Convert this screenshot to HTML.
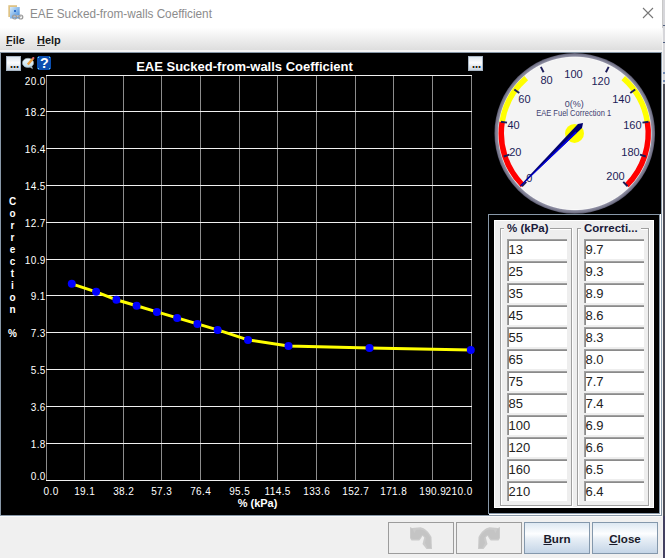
<!DOCTYPE html>
<html><head><meta charset="utf-8">
<style>
html,body{margin:0;padding:0}
body{width:665px;height:558px;overflow:hidden;position:relative;background:#f0f0f0;font-family:"Liberation Sans",sans-serif}
.a{position:absolute}
#tb{left:0;top:0;width:662px;height:28px;background:#fff}
#ttl{left:29.5px;top:7px;font-size:12.4px;color:#8c8c8c;white-space:pre;transform:scaleX(0.948);transform-origin:0 0}
#mb{left:0;top:28px;width:662px;height:22px;background:linear-gradient(#fefefe,#dedede)}
.mi{font-size:11.8px;font-weight:700;color:#1a1a1a;top:32.5px;transform:scaleX(0.93);transform-origin:0 0}
.mi u{text-decoration:none}
#panel{left:0;top:52px;width:662px;height:464px;background:#000}
.fld{position:absolute;width:60px;height:20px;background:#fff;box-sizing:border-box;border-top:2px solid #8a8a8a;border-left:2px solid #8a8a8a;font-size:13px;color:#222;padding-left:0;text-indent:-0.5px;line-height:17px}
.fld:before{content:"";position:absolute;left:-2px;top:-2px;right:0;bottom:0;border-top:1px solid #a0a0a0;border-left:1px solid #a0a0a0}
.gt{top:222px;font-size:11.5px;font-weight:700;color:#1a1a3a;white-space:pre;background:#eee;padding:0 1px}
.btn{position:absolute;top:522px;height:32px;box-sizing:border-box;font-size:11.6px;font-weight:700;color:#1a1a2a;text-align:center;line-height:32px}
</style></head><body>
<div class="a" id="tb"></div>
<svg class="a" style="left:8px;top:5px" width="16" height="16" viewBox="0 0 16 16">
  <defs><linearGradient id="ig" x1="0" y1="0" x2="1" y2="1"><stop offset="0" stop-color="#d8ecfa"/><stop offset="1" stop-color="#3a86dc"/></linearGradient></defs>
  <rect x="0.3" y="0.2" width="8.7" height="11.8" fill="#d9b870" opacity="0.85"/>
  <rect x="2" y="2" width="9.7" height="11.5" fill="url(#ig)"/>
  <rect x="6" y="5" width="2" height="2" fill="#2a6cc8"/>
  <rect x="5.5" y="10.2" width="8" height="2" fill="#bdbdbd"/>
  <circle cx="6.5" cy="12" r="2" fill="none" stroke="#9a9a9a" stroke-width="1.2"/>
  <circle cx="12.8" cy="12" r="2" fill="none" stroke="#9a9a9a" stroke-width="1.2"/>
</svg>
<div class="a" id="ttl">EAE Sucked-from-walls Coefficient</div>
<svg class="a" style="left:642px;top:7px" width="12" height="12"><path d="M1 1L11 11M11 1L1 11" stroke="#777" stroke-width="1.1"/></svg>
<div class="a" id="mb"></div>
<div class="a" style="left:0;top:50px;width:662px;height:2px;background:#f4f4f4"></div>
<div class="a mi" style="left:6px"><u>F</u>ile</div>
<div class="a mi" style="left:37px"><u>H</u>elp</div>
<div class="a" style="left:6px;top:45px;width:6px;height:1px;background:#333"></div>
<div class="a" style="left:37px;top:45px;width:8px;height:1px;background:#333"></div>
<div class="a" id="panel"></div>
<div class="a" style="left:0;top:52px;width:662px;height:1px;background:#8898a8"></div>
<div class="a" style="left:0;top:52px;width:1px;height:464px;background:#8898a8"></div>
<div class="a" style="left:0;top:515px;width:662px;height:1px;background:#8898a8"></div>
<div class="a" style="left:0;top:516px;width:662px;height:1px;background:#fafafa"></div>
<div class="a" style="left:661px;top:52px;width:1px;height:464px;background:#8898a8"></div>
<div class="a" style="left:662px;top:0;width:1px;height:558px;background:#f4f4f4"></div>
<div class="a" style="left:662px;top:0;width:1px;height:28px;background:#c8c8c8"></div>
<div class="a" style="left:663px;top:0;width:2px;height:84px;background:#d6d6da"></div>
<div class="a" style="left:663px;top:84px;width:2px;height:432px;background:#4c4c56"></div>
<div class="a" style="left:663px;top:25px;width:2px;height:1px;background:#506080"></div>
<div class="a" style="left:663px;top:42px;width:2px;height:1px;background:#506080"></div>
<div class="a" style="left:663px;top:72px;width:2px;height:2px;background:#7088b0"></div>
<div class="a" style="left:663px;top:80px;width:2px;height:2px;background:#7088b0"></div>
<div class="a" style="left:663px;top:516px;width:2px;height:42px;background:#434060"></div>

<!--ICONS-->
<svg class="a" style="left:6px;top:56px" width="15" height="15" shape-rendering="crispEdges">
 <defs><linearGradient id="eb" x1="0" y1="0" x2="0" y2="1"><stop offset="0" stop-color="#dfe7ef"/><stop offset="0.45" stop-color="#fbfcfd"/><stop offset="1" stop-color="#c9d5e1"/></linearGradient></defs>
 <rect x="0" y="0" width="15" height="15" fill="#a9b6c4"/><rect x="1" y="1" width="13" height="13" fill="url(#eb)"/>
 <rect x="4" y="10" width="1" height="2" fill="#e0a050"/><rect x="5" y="10" width="1" height="2" fill="#302418"/><rect x="6" y="10" width="1" height="2" fill="#4a9ef0"/>
 <rect x="7" y="10" width="1" height="2" fill="#e0a050"/><rect x="8" y="10" width="1" height="2" fill="#302418"/><rect x="9" y="10" width="1" height="2" fill="#4a9ef0"/>
 <rect x="10" y="10" width="1" height="2" fill="#e0a050"/><rect x="11" y="10" width="1" height="2" fill="#302418"/><rect x="12" y="10" width="1" height="2" fill="#4a9ef0"/>
</svg>
<svg class="a" style="left:468px;top:56px" width="15" height="15" shape-rendering="crispEdges">
 <rect x="0" y="0" width="15" height="15" fill="#a9b6c4"/><rect x="1" y="1" width="13" height="13" fill="url(#eb)"/>
 <rect x="4" y="10" width="1" height="2" fill="#e0a050"/><rect x="5" y="10" width="1" height="2" fill="#302418"/><rect x="6" y="10" width="1" height="2" fill="#4a9ef0"/>
 <rect x="7" y="10" width="1" height="2" fill="#e0a050"/><rect x="8" y="10" width="1" height="2" fill="#302418"/><rect x="9" y="10" width="1" height="2" fill="#4a9ef0"/>
 <rect x="10" y="10" width="1" height="2" fill="#e0a050"/><rect x="11" y="10" width="1" height="2" fill="#302418"/><rect x="12" y="10" width="1" height="2" fill="#4a9ef0"/>
</svg>
<svg class="a" style="left:22px;top:57px" width="13" height="13" viewBox="0 0 13 13">
 <defs><linearGradient id="cb" x1="0" y1="0" x2="0" y2="1"><stop offset="0" stop-color="#eef8fc"/><stop offset="1" stop-color="#bcdcec"/></linearGradient></defs>
 <ellipse cx="6" cy="5.9" rx="5.6" ry="4.6" fill="url(#cb)" stroke="#8f9ea8" stroke-width="0.7"/>
 <path d="M8 10 L10.5 11.8 L10 9.6Z" fill="#c8e4f0" stroke="#8f9ea8" stroke-width="0.5"/>
 <path d="M5.8 7.4 L11 1.4" stroke="#eea040" stroke-width="2.3"/>
 <path d="M10.6 1.8 L12 0.4" stroke="#e86878" stroke-width="2"/>
</svg>
<svg class="a" style="left:37px;top:56px" width="14" height="14" shape-rendering="crispEdges">
 <rect x="1" y="0" width="12" height="14" fill="#0b4fb0"/><rect x="0" y="1" width="14" height="12" fill="#0b4fb0"/>
 <rect x="0" y="0" width="1" height="1" fill="#000"/><rect x="13" y="0" width="1" height="1" fill="#000"/><rect x="0" y="13" width="1" height="1" fill="#000"/><rect x="13" y="13" width="1" height="1" fill="#000"/>
 <rect x="1" y="1" width="1" height="1" fill="#7ad8c8"/><rect x="12" y="1" width="1" height="1" fill="#7ad8c8"/><rect x="1" y="12" width="1" height="1" fill="#7ad8c8"/><rect x="12" y="12" width="1" height="1" fill="#7ad8c8"/>
</svg>
<div class="a" style="left:40px;top:53.5px;font-size:15.5px;font-weight:700;color:#fff;transform:scaleX(0.92);transform-origin:0 0">?</div>
<!--/ICONS-->
<!--CHART-->
<svg class="a" style="left:0;top:0" width="665" height="558" shape-rendering="crispEdges">
<rect x="46" y="75" width="1" height="406" fill="#8c8c8c"/>
<rect x="84" y="75" width="1" height="406" fill="#8c8c8c"/>
<rect x="123" y="75" width="1" height="406" fill="#8c8c8c"/>
<rect x="161" y="75" width="1" height="406" fill="#8c8c8c"/>
<rect x="200" y="75" width="1" height="406" fill="#8c8c8c"/>
<rect x="239" y="75" width="1" height="406" fill="#8c8c8c"/>
<rect x="277" y="75" width="1" height="406" fill="#8c8c8c"/>
<rect x="316" y="75" width="1" height="406" fill="#8c8c8c"/>
<rect x="355" y="75" width="1" height="406" fill="#8c8c8c"/>
<rect x="393" y="75" width="1" height="406" fill="#8c8c8c"/>
<rect x="432" y="75" width="1" height="406" fill="#8c8c8c"/>
<rect x="471" y="75" width="1" height="406" fill="#8c8c8c"/>
<rect x="46" y="75" width="426" height="1" fill="#f0f0f0"/>
<rect x="46" y="111" width="426" height="1" fill="#f0f0f0"/>
<rect x="46" y="148" width="426" height="1" fill="#f0f0f0"/>
<rect x="46" y="185" width="426" height="1" fill="#f0f0f0"/>
<rect x="46" y="222" width="426" height="1" fill="#f0f0f0"/>
<rect x="46" y="259" width="426" height="1" fill="#f0f0f0"/>
<rect x="46" y="295" width="426" height="1" fill="#f0f0f0"/>
<rect x="46" y="332" width="426" height="1" fill="#f0f0f0"/>
<rect x="46" y="369" width="426" height="1" fill="#f0f0f0"/>
<rect x="46" y="406" width="426" height="1" fill="#f0f0f0"/>
<rect x="46" y="443" width="426" height="1" fill="#f0f0f0"/>
<rect x="46" y="480" width="426" height="1" fill="#f0f0f0"/>
</svg>
<svg class="a" style="left:0;top:0" width="665" height="558">
<g font-family="Liberation Sans" font-size="10" fill="#fff" letter-spacing="0.4">
<text x="45.8" y="84.6" text-anchor="end">20.0</text>
<text x="45.8" y="115.6" text-anchor="end">18.2</text>
<text x="45.8" y="152.6" text-anchor="end">16.4</text>
<text x="45.8" y="189.6" text-anchor="end">14.5</text>
<text x="45.8" y="226.6" text-anchor="end">12.7</text>
<text x="45.8" y="263.6" text-anchor="end">10.9</text>
<text x="45.8" y="299.6" text-anchor="end">9.1</text>
<text x="45.8" y="336.6" text-anchor="end">7.3</text>
<text x="45.8" y="373.6" text-anchor="end">5.5</text>
<text x="45.8" y="410.6" text-anchor="end">3.6</text>
<text x="45.8" y="447.6" text-anchor="end">1.8</text>
<text x="45.8" y="480.1" text-anchor="end">0.0</text>
<text x="43.5" y="494.6">0.0</text>
<text x="84.7" y="494.6" text-anchor="middle">19.1</text>
<text x="123.7" y="494.6" text-anchor="middle">38.2</text>
<text x="161.7" y="494.6" text-anchor="middle">57.3</text>
<text x="200.7" y="494.6" text-anchor="middle">76.4</text>
<text x="239.7" y="494.6" text-anchor="middle">95.5</text>
<text x="277.7" y="494.6" text-anchor="middle">114.5</text>
<text x="316.7" y="494.6" text-anchor="middle">133.6</text>
<text x="355.7" y="494.6" text-anchor="middle">152.7</text>
<text x="393.7" y="494.6" text-anchor="middle">171.8</text>
<text x="432.7" y="494.6" text-anchor="middle">190.9</text>
<text x="472.6" y="494.6" text-anchor="end">210.0</text>
</g>
<text x="257.5" y="507" font-family="Liberation Sans" font-size="11" font-weight="700" fill="#fff" text-anchor="middle">% (kPa)</text>
<g font-family="Liberation Sans" font-size="10" font-weight="700" fill="#fff" text-anchor="middle">
<text x="12.5" y="205">C</text>
<text x="12.5" y="217">o</text>
<text x="12.5" y="229">r</text>
<text x="12.5" y="241">r</text>
<text x="12.5" y="253">e</text>
<text x="12.5" y="265">c</text>
<text x="12.5" y="277">t</text>
<text x="12.5" y="289">i</text>
<text x="12.5" y="301">o</text>
<text x="12.5" y="313">n</text>
<text x="12.5" y="337">%</text>
</g>
<text x="244.5" y="71" font-family="Liberation Sans" font-size="13" font-weight="700" fill="#fff" text-anchor="middle">EAE Sucked-from-walls Coefficient</text>
<polyline fill="none" stroke="#ffff00" stroke-width="3" stroke-linejoin="round" points="71.8,283.8 96.1,291.8 116.4,299.8 136.6,305.8 156.9,311.9 177.1,317.9 197.4,323.9 217.6,329.9 248.0,339.9 288.5,345.9 369.5,347.9 470.8,349.9"/>
<circle cx="71.8" cy="283.8" r="4" fill="#0000ff"/>
<circle cx="96.1" cy="291.8" r="4" fill="#0000ff"/>
<circle cx="116.4" cy="299.8" r="4" fill="#0000ff"/>
<circle cx="136.6" cy="305.8" r="4" fill="#0000ff"/>
<circle cx="156.9" cy="311.9" r="4" fill="#0000ff"/>
<circle cx="177.1" cy="317.9" r="4" fill="#0000ff"/>
<circle cx="197.4" cy="323.9" r="4" fill="#0000ff"/>
<circle cx="217.6" cy="329.9" r="4" fill="#0000ff"/>
<circle cx="248.0" cy="339.9" r="4" fill="#0000ff"/>
<circle cx="288.5" cy="345.9" r="4" fill="#0000ff"/>
<circle cx="369.5" cy="347.9" r="4" fill="#0000ff"/>
<circle cx="470.8" cy="349.9" r="4" fill="#0000ff"/>
</svg>
<svg class="a" style="left:0;top:0" width="665" height="558">
<defs><linearGradient id="rg" x1="0" y1="0" x2="0" y2="1"><stop offset="0" stop-color="#5e5e70"/><stop offset="0.5" stop-color="#8a8a98"/><stop offset="1" stop-color="#5e5e70"/></linearGradient></defs>
<defs><radialGradient id="ring" cx="574.75" cy="133.4" r="80.3" gradientUnits="userSpaceOnUse"><stop offset="0.948" stop-color="#ffffff"/><stop offset="0.962" stop-color="#8c8ca0"/><stop offset="0.985" stop-color="#76768a"/><stop offset="1" stop-color="#55556a"/></radialGradient></defs>
<circle cx="574.75" cy="133.4" r="80.3" fill="url(#ring)"/>
<circle cx="574.75" cy="133.4" r="76.2" fill="#f4f4f4"/>
<path d="M522.78,185.37 A73.5,73.5 0 0 1 502.15,121.90" fill="none" stroke="#ff0000" stroke-width="5.5"/>
<path d="M502.15,121.90 A73.5,73.5 0 0 1 526.23,78.19" fill="none" stroke="#ffff00" stroke-width="5.5"/>
<path d="M623.27,78.19 A73.5,73.5 0 0 1 647.35,121.90" fill="none" stroke="#ffff00" stroke-width="5.5"/>
<path d="M647.35,121.90 A73.5,73.5 0 0 1 626.72,185.37" fill="none" stroke="#ff0000" stroke-width="5.5"/>
<line x1="526.24" y1="181.91" x2="521.93" y2="186.22" stroke="#1c1c58" stroke-width="1.9"/>
<line x1="509.51" y1="154.60" x2="503.71" y2="156.48" stroke="#1c1c58" stroke-width="1.9"/>
<line x1="506.99" y1="122.67" x2="500.97" y2="121.71" stroke="#1c1c58" stroke-width="1.9"/>
<line x1="519.25" y1="93.08" x2="514.32" y2="89.49" stroke="#1c1c58" stroke-width="1.9"/>
<line x1="543.61" y1="72.28" x2="540.84" y2="66.84" stroke="#1c1c58" stroke-width="1.9"/>
<line x1="605.89" y1="72.28" x2="608.66" y2="66.84" stroke="#1c1c58" stroke-width="1.9"/>
<line x1="630.25" y1="93.08" x2="635.18" y2="89.49" stroke="#1c1c58" stroke-width="1.9"/>
<line x1="642.51" y1="122.67" x2="648.53" y2="121.71" stroke="#1c1c58" stroke-width="1.9"/>
<line x1="639.99" y1="154.60" x2="645.79" y2="156.48" stroke="#1c1c58" stroke-width="1.9"/>
<line x1="623.26" y1="181.91" x2="627.57" y2="186.22" stroke="#1c1c58" stroke-width="1.9"/>
<g font-family="Liberation Sans" font-size="11" fill="#1c1c58" text-anchor="middle">
<text x="529.2" y="182.1">0</text>
<text x="515.3" y="155.9">20</text>
<text x="513.5" y="129.1">40</text>
<text x="524.4" y="103.1">60</text>
<text x="546.5" y="83.5">80</text>
<text x="573.5" y="78.1">100</text>
<text x="600.6" y="85.2">120</text>
<text x="621.4" y="103.3">140</text>
<text x="632.4" y="129.4">160</text>
<text x="630.5" y="156.3">180</text>
<text x="615.5" y="179.9">200</text>
</g>
<text x="574.2" y="106.6" font-family="Liberation Sans" font-size="9" fill="#404070" text-anchor="middle">0(%)</text>
<text x="536.2" y="115.5" font-family="Liberation Sans" font-size="8.7" fill="#404070" textLength="75" lengthAdjust="spacingAndGlyphs">EAE Fuel Correction 1</text>
<circle cx="574.5" cy="133.4" r="9.5" fill="#ffff00"/>
<polygon points="583.01,123.01 577.92,124.00 520.15,185.44 520.65,186.22 582.02,128.10" fill="#00006e"/>
<polygon points="575.59,131.56 576.79,132.76 520.65,186.22 520.44,185.73" fill="#0000f0"/>
</svg>
<!--/CHART-->
<!-- table container -->
<div class="a" style="left:488px;top:214px;width:172px;height:1px;background:#8898a8"></div>
<div class="a" style="left:488px;top:214px;width:1px;height:300px;background:#8898a8"></div>
<div class="a" style="left:488px;top:513px;width:172px;height:1px;background:#8898a8"></div>
<div class="a" style="left:659px;top:215px;width:1px;height:299px;background:#8898a8"></div>
<div class="a" style="left:660px;top:214px;width:1px;height:301px;background:#fff"></div>
<div class="a" style="left:489px;top:514px;width:172px;height:1px;background:#fff"></div>
<div class="a" style="left:494px;top:220px;width:160px;height:288px;background:#fff"></div>
<div class="a" style="left:495px;top:221px;width:158px;height:286px;background:#eeeeee"></div>
<!--TABLE-->
<div class="a" style="left:500px;top:228px;width:1px;height:277px;background:#a0a0a0"></div>
<div class="a" style="left:501px;top:229px;width:1px;height:276px;background:#fff"></div>
<div class="a" style="left:571px;top:228px;width:1px;height:278px;background:#a0a0a0"></div>
<div class="a" style="left:572px;top:228px;width:1px;height:279px;background:#fff"></div>
<div class="a" style="left:500px;top:505px;width:72px;height:1px;background:#a0a0a0"></div>
<div class="a" style="left:500px;top:506px;width:73px;height:1px;background:#fff"></div>
<div class="a" style="left:500px;top:228px;width:4px;height:1px;background:#a0a0a0"></div>
<div class="a" style="left:501px;top:229px;width:3px;height:1px;background:#fff"></div>
<div class="a" style="left:550px;top:228px;width:21px;height:1px;background:#a0a0a0"></div>
<div class="a" style="left:550px;top:229px;width:21px;height:1px;background:#fff"></div>
<div class="a" style="left:577px;top:228px;width:1px;height:277px;background:#a0a0a0"></div>
<div class="a" style="left:578px;top:229px;width:1px;height:276px;background:#fff"></div>
<div class="a" style="left:648px;top:228px;width:1px;height:278px;background:#a0a0a0"></div>
<div class="a" style="left:649px;top:228px;width:1px;height:279px;background:#fff"></div>
<div class="a" style="left:577px;top:505px;width:72px;height:1px;background:#a0a0a0"></div>
<div class="a" style="left:577px;top:506px;width:73px;height:1px;background:#fff"></div>
<div class="a" style="left:577px;top:228px;width:4px;height:1px;background:#a0a0a0"></div>
<div class="a" style="left:578px;top:229px;width:3px;height:1px;background:#fff"></div>
<div class="a" style="left:641px;top:228px;width:7px;height:1px;background:#a0a0a0"></div>
<div class="a" style="left:641px;top:229px;width:7px;height:1px;background:#fff"></div>
<div class="a gt" style="left:506px">% (kPa)</div>
<div class="a gt" style="left:583px">Correcti...</div>
<div class="fld" style="left:507px;top:239px">13</div>
<div class="fld" style="left:584px;top:239px">9.7</div>
<div class="fld" style="left:507px;top:261px">25</div>
<div class="fld" style="left:584px;top:261px">9.3</div>
<div class="fld" style="left:507px;top:283px">35</div>
<div class="fld" style="left:584px;top:283px">8.9</div>
<div class="fld" style="left:507px;top:305px">45</div>
<div class="fld" style="left:584px;top:305px">8.6</div>
<div class="fld" style="left:507px;top:327px">55</div>
<div class="fld" style="left:584px;top:327px">8.3</div>
<div class="fld" style="left:507px;top:349px">65</div>
<div class="fld" style="left:584px;top:349px">8.0</div>
<div class="fld" style="left:507px;top:371px">75</div>
<div class="fld" style="left:584px;top:371px">7.7</div>
<div class="fld" style="left:507px;top:393px">85</div>
<div class="fld" style="left:584px;top:393px">7.4</div>
<div class="fld" style="left:507px;top:415px">100</div>
<div class="fld" style="left:584px;top:415px">6.9</div>
<div class="fld" style="left:507px;top:437px">120</div>
<div class="fld" style="left:584px;top:437px">6.6</div>
<div class="fld" style="left:507px;top:459px">160</div>
<div class="fld" style="left:584px;top:459px">6.5</div>
<div class="fld" style="left:507px;top:481px">210</div>
<div class="fld" style="left:584px;top:481px">6.4</div>
<!--/TABLE-->
<div class="btn" style="left:388px;width:66px;border:1px solid #9c9c9c;background:#efefef"></div>
<div class="btn" style="left:456px;width:66px;border:1px solid #9c9c9c;background:#efefef"></div>
<svg class="a" style="left:410px;top:527px" width="22" height="22" viewBox="0 0 22 22"><path d="M0,0 L2,1 L10.5,0.3 C14.5,1 19,5 21.5,10 L22,22 L16.5,22 L12.5,17 L14.2,10.5 L12.5,8.7 L10.9,11.4 L9.3,13.5 L1.5,13.5 L0,11 Z" fill="#cbcbcb"/><path d="M1,1.5 L1,11.5 L3,12 L9,12 L12,8 L14,8.5 L16,11 L15,16 L17.5,21 L21,21 L20.5,11 C18,6 14,2.5 10.5,2.5 L6,3 L4.5,6 L2.5,2Z" fill="#c4c4c4"/></svg>
<svg class="a" style="left:478px;top:527px" width="22" height="22" viewBox="0 0 22 22"><g transform="translate(22,0) scale(-1,1)"><path d="M0,0 L2,1 L10.5,0.3 C14.5,1 19,5 21.5,10 L22,22 L16.5,22 L12.5,17 L14.2,10.5 L12.5,8.7 L10.9,11.4 L9.3,13.5 L1.5,13.5 L0,11 Z" fill="#cbcbcb"/><path d="M1,1.5 L1,11.5 L3,12 L9,12 L12,8 L14,8.5 L16,11 L15,16 L17.5,21 L21,21 L20.5,11 C18,6 14,2.5 10.5,2.5 L6,3 L4.5,6 L2.5,2Z" fill="#c4c4c4"/></g></svg>
<div class="btn" style="left:524px;width:66px;border:1px solid #8498ac;background:linear-gradient(#dde8f2,#fdfeff 36%,#e8eff6 52%,#c4d5e7)"><u>B</u>urn</div>
<div class="btn" style="left:592px;width:66px;border:1px solid #8498ac;background:linear-gradient(#dde8f2,#fdfeff 36%,#e8eff6 52%,#c4d5e7)"><u>C</u>lose</div>
</body></html>
